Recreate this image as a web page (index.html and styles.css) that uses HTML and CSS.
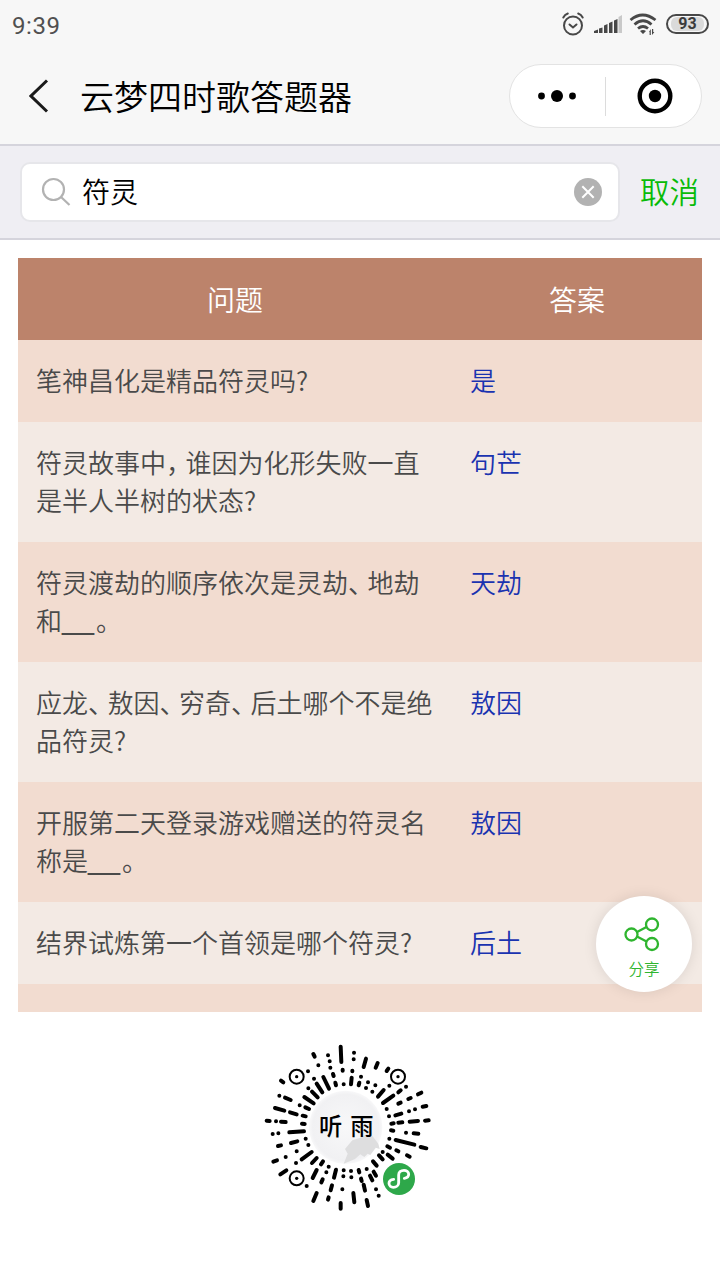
FILE: index.html
```html
<!DOCTYPE html>
<html lang="zh-CN">
<head>
    <meta charset="UTF-8">
    <meta name="viewport" content="width=device-width, initial-scale=1.0">
    <title>云梦四时歌答题器</title>
    <link rel="stylesheet" href="styles.css">
</head>
<body>

    <header class="header">
        <div class="status-bar">
            <span class="time">9:39</span>
            <svg class="status-icons" width="100" height="26" viewBox="0 0 100 26">
                <!-- alarm -->
                <g fill="none" stroke="#484848" stroke-width="2" stroke-linecap="round">
                    <circle cx="15" cy="14.500" r="9"/>
                    <path d="M11.500 13.500l3.500 3 3.500-3M5.300 6.500q1.500-3 4.500-4M24.700 6.500q-1.500-3-4.500-4"/>
                </g>
                <!-- signal -->
                <path fill="#484848" d="M36 22v-2l4-1.500v3.500zM41 17.500l3.500-1v5.500h-3.500zM46 14.500l3.500-1.500v9h-3.500zM51 12l3.500-1.500v11.500h-3.500zM56 9.500l3.500-1.500v14h-3.500z"/>
                <path fill="#c9c9c9" d="M60.500 6l3.500-2v18h-3.500z"/>
                <!-- wifi -->
                <g fill="none" stroke="#484848" stroke-width="2.800">
                    <path d="M72.500 9q12-10 25 0M76.500 13.500q8.500-7.500 17 0M80 17.500q5-4 10 0"/>
                </g>
                <path fill="#484848" d="M82 20q3-2 6 0l-3 3zM91 21l1.800-3v6h-1.200v-3zM94 18h1.200v3h1.200l-2.400 3z"/>
            </svg>
            <div class="battery"><span>93</span></div>
        </div>
        <div class="nav">
            <svg class="back" width="20" height="34" viewBox="0 0 20 34">
                <path d="M18 1.500L2 17l16 15.500" fill="none" stroke="#1a1a1a" stroke-width="3"/>
            </svg>
            <h1 class="title">云梦四时歌答题器</h1>
            <div class="capsule">
                <svg class="dots" width="40" height="14" viewBox="0 0 40 14">
                    <circle cx="4.500" cy="7" r="3.400"/>
                    <circle cx="20" cy="7" r="6"/>
                    <circle cx="35.500" cy="7" r="3.400"/>
                </svg>
                <span class="divider"></span>
                <svg class="target" width="36" height="36" viewBox="0 0 36 36">
                    <circle cx="18" cy="18" r="15.300" fill="none" stroke="#000" stroke-width="4.400"/>
                    <circle cx="18" cy="18" r="6.200"/>
                </svg>
            </div>
        </div>
    </header>

    <div class="search-bar">
        <div class="search-box">
            <svg width="30" height="30" viewBox="0 0 30 30" fill="none" stroke="#b2b2b2" stroke-width="2.200">
                <circle cx="12.500" cy="12.500" r="10.500"/>
                <path d="M20 20l8.500 8"/>
            </svg>
            <span class="keyword">符灵</span>
            <svg class="clear" width="28" height="28" viewBox="0 0 28 28">
                <circle cx="14" cy="14" r="14" fill="#b2b2b2"/>
                <path d="M8.300 8.300l11.400 11.400M19.700 8.300L8.300 19.700" stroke="#fff" stroke-width="2"/>
            </svg>
        </div>
        <span class="cancel">取消</span>
    </div>

    <main class="content">
        <div class="table">
            <div class="row head">
                <div class="question">问题</div>
                <div class="answer">答案</div>
            </div>
            <div class="row">
                <div class="question">笔神昌化是精品符灵吗?</div>
                <div class="answer">是</div>
            </div>
            <div class="row">
                <div class="question">符灵故事中<i>，</i>谁因为化形失败一直是半人半树的状态?</div>
                <div class="answer">句芒</div>
            </div>
            <div class="row">
                <div class="question">符灵渡劫的顺序依次是灵劫<i>、</i>地劫和<b>__</b>。</div>
                <div class="answer">天劫</div>
            </div>
            <div class="row">
                <div class="question">应龙<i>、</i>敖因<i>、</i>穷奇<i>、</i>后土哪个不是绝品符灵?</div>
                <div class="answer">敖因</div>
            </div>
            <div class="row">
                <div class="question">开服第二天登录游戏赠送的符灵名称是<b>__</b>。</div>
                <div class="answer">敖因</div>
            </div>
            <div class="row">
                <div class="question">结界试炼第一个首领是哪个符灵?</div>
                <div class="answer">后土</div>
            </div>
            <div class="row"></div>
        </div>

        <div class="share">
            <svg width="36" height="36" viewBox="0 0 36 36" fill="none" stroke="#2fb52f" stroke-width="2.300">
                <circle cx="7.500" cy="18.500" r="6"/>
                <circle cx="28" cy="8.500" r="6"/>
                <circle cx="28" cy="28" r="6"/>
                <path d="M13 16l9.500-5M13 20.500l9.500 5"/>
            </svg>
            <span>分享</span>
        </div>
    </main>

    <footer class="footer">
        <svg class="code" width="190" height="185" viewBox="0 0 570 555">
            <defs>
                <radialGradient id="mist">
                    <stop offset="0" stop-color="#f8f8f9"/>
                    <stop offset="0.900" stop-color="#f1f1f3"/>
                    <stop offset="1" stop-color="#f8f8f9"/>
                </radialGradient>
            </defs>
            <circle cx="272" cy="277" r="110" fill="url(#mist)"/>
            <path fill="#dededf" d="M266 386l12-30-8-14 22-26 24-8 20-12 14 4 20 26 4 16-12-4-16 22-8-4-10 10-12-8-16 14-14 6z"/>
            <g stroke="#000" stroke-width="12" stroke-linecap="round">
                <path d="M257 35L259 81M263 104v3M266 148h.1M219 61h.1M224 79h.1M226 98h.1M234 117l2 6M241 143l2 8M175 57l4 8M190 91h.1M205 126l17 35M159 109h.1M177 131h.1M185 146l17 26M160 160h.1"/>
                <path d="M297 53h.1M296 73h.1M292 107v2M290 128l-2 20M333 71l-7 25M318 125h.1M313 143l-2 8M368 84l-6 14M339 142h.1M333 159h.1M400 101l-5 7M361 151h.1M352 170h.1M403 152h.1M386 165l-17 20"/>
                <path d="M453 155h.1M437 166l-7 6M415 182l-31 22M499 173l-10 5M467 189l-7 3M437 203l-7 3M395 222h.1M514 213l-11 2M480 223h.1M462 229h.1M439 236l-18 5M402 244h.1M521 256l-11 1M489 258l-25 2M442 262l-12 1M416 265l-7 1"/>
                <path d="M490 296l-14-1M453 293h.1M415 287l-7-1M514 340l-17-4M478 329l-56-14M403 311h.1M464 365l-8-4M430 349l-6-3M405 338l-8-4M413 371l-15-12M383 373l-11-12M383 351h.1M365 392l-11-13"/>
                <path d="M371 482h.1M363 463h.1M352 436l-7-14M363 422l-7-12M339 513l-4-18M330 467l-4-18M320 438l-2-7M313 412l-2-7M335 402h.1M298 502l-3-28M289 427h.1M288 408h.1M257 521v-17M262 463h.1M265 424h.1M266 406h.1"/>
                <path d="M219 494l2-7M227 466l4-15M237 428l6-24M175 498l10-24M199 442l4-9M214 412h.1M221 395h.1M155 453h.1M173 429l12-24M198 388l6-9M76 418l18-12M123 384h.1M140 373l30-22M171 384l14-15"/>
                <path d="M55 380l11-4M92 366h.1M125 349h.1M160 330h.1M69 333l9-2M108 324l19-5M152 311h.1M53 297h.1M70 295h.1M103 292l44-3M35 257l9 1M63 259h.1M78 260l14 1M141 266l8 1M60 219l28 8M105 232l20 6M143 242l9 2"/>
                <path d="M73 182h.1M90 188l17 7M134 211h.1M151 217l11 5M78 137l7 5M148 186l28 19M171 170l17 17"/>
            </g>
            <g fill="#fff" stroke="#000" stroke-width="6">
                <circle cx="125" cy="125" r="21"/>
                <circle cx="429" cy="125" r="21"/>
                <circle cx="125" cy="430" r="21"/>
            </g>
            <circle cx="125" cy="125" r="5"/>
            <circle cx="429" cy="125" r="5"/>
            <circle cx="125" cy="430" r="5"/>
            <g class="brush">
                <text x="192" y="301">听</text>
                <text x="286" y="299">雨</text>
            </g>
            <circle cx="432" cy="432" r="48" fill="#2ea84a"/>
            <path d="M416 433c-9 1-14 6-14 12 0 7 6 12 13 12 9 0 16-6 16-14v-23c0-8 6-14 16-14 7 0 14 5 14 12 0 6-5 11-13 12" fill="none" stroke="#fff" stroke-width="8.500" stroke-linecap="round"/>
        </svg>
    </footer>

</body>
</html>
```
FILE: styles.css
```css
* {
    box-sizing: border-box;
}
body {
    margin: 0;
    width: 720px;
    height: 1280px;
    overflow: hidden;
    background-color: #fff;
    font-family: "Noto Sans CJK SC", sans-serif;
    font-weight: 350;
}
svg {
    display: block;
    flex-shrink: 0;
}
.header {
    height: 146px;
    background-color: #f7f7f7;
    border-bottom: 2px solid #d5d4dc;
}
.status-bar {
    display: flex;
    align-items: center;
    height: 48px;
    padding: 0 11px 0 12px;
}
.time {
    flex: 1;
    font-family: Roboto, sans-serif;
    font-size: 24px;
    font-weight: 400;
    letter-spacing: 0.6px;
    color: #505050;
    padding-top: 3px;
}
.status-icons {
    margin-right: 8px;
}
.battery {
    width: 43px;
    height: 20px;
    padding: 1px 3px;
    border: 2px solid #484848;
    border-radius: 10px;
}
.battery span {
    display: block;
    height: 14px;
    border-radius: 6px;
    background-color: #dadada;
    color: #3c3c3c;
    font: bold 16px/14px Roboto, sans-serif;
    text-align: center;
}
.nav {
    display: flex;
    align-items: center;
    height: 96px;
    padding: 0 18px 0 29px;
}
.title {
    flex: 1;
    margin: 0 0 0 31px;
    font-size: 34px;
    font-weight: 350;
    line-height: 48px;
    color: #000;
}
.capsule {
    display: flex;
    align-items: center;
    width: 193px;
    height: 64px;
    padding-left: 27px;
    background-color: #fff;
    border: 1px solid #e3e3e3;
    border-radius: 32px;
}
.divider {
    width: 1px;
    height: 39px;
    margin: 0 31px 0 28px;
    background-color: #dcdcdc;
}
.search-bar {
    display: flex;
    align-items: center;
    height: 94px;
    padding: 0 20px;
    background-color: #efeef3;
    border-bottom: 2px solid #d5d4dc;
}
.search-box {
    display: flex;
    align-items: center;
    width: 600px;
    height: 60px;
    padding: 0 16px 0 19px;
    background-color: #fff;
    border: 2px solid #e6e6ea;
    border-radius: 10px;
}
.keyword {
    flex: 1;
    margin: 0 0 2px 11px;
    font-size: 28px;
    line-height: 40px;
    color: #000;
}
.cancel {
    margin: 0 0 5px 20px;
    font-size: 29.5px;
    color: #09bb07;
}
.content {
    position: relative;
    padding: 18px 18px 0;
}
.table {
    height: 754px;
    overflow: hidden;
    font-size: 26px;
    line-height: 38px;
}
.row {
    display: flex;
    min-height: 82px;
    background-color: #f3eae4;
}
.row:nth-child(even) {
    background-color: #f2dcd0;
}
.row .question {
    width: 434px;
    padding: 21px 18px 23px;
    color: #4a4a4a;
}
.row .answer {
    flex: 1;
    padding: 21px 18px 23px;
    color: #1a33b0;
}
.row.head {
    background-color: #bc836b;
    font-size: 28px;
    text-align: center;
}
.row.head .question,
.row.head .answer {
    padding-top: 22px;
    padding-bottom: 22px;
    color: #fff;
}
/* half width punctuation, solid blanks */
.question i {
    font-style: normal;
    font-feature-settings: "halt";
    margin-right: 6.5px;
}
.question b {
    margin-right: 2px;
    font-family: "Liberation Sans", sans-serif;
    font-size: 28.8px;
    font-weight: 400;
    line-height: 1;
    vertical-align: 2px;
}
.share {
    position: absolute;
    right: 28px;
    top: 656px;
    display: flex;
    flex-direction: column;
    align-items: center;
    width: 96px;
    height: 96px;
    padding-top: 20px;
    border-radius: 50%;
    background-color: #fff;
    box-shadow: 0 0 14px rgba(0, 0, 0, 0.1);
}
.share svg {
    margin-right: 4px;
}
.share span {
    margin-top: 5px;
    font-size: 15.5px;
    line-height: 22px;
    color: #2fb52f;
}
.footer {
    padding: 23px 0 0 255px;
}
.brush {
    font-family: "Noto Sans CJK SC", sans-serif;
    font-size: 70px;
    font-weight: 500;
}
```
